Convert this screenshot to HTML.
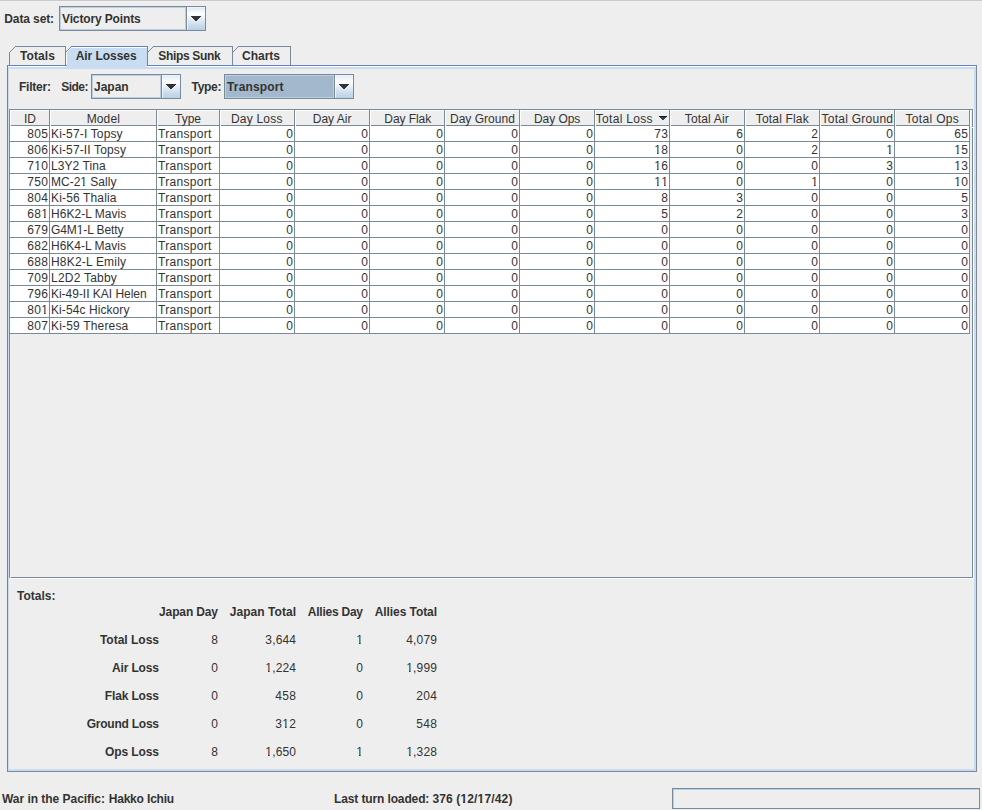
<!DOCTYPE html>
<html><head><meta charset="utf-8"><title>Tracker</title><style>
html,body{margin:0;padding:0}
body{width:982px;height:810px;overflow:hidden;background:#EEEEEE;position:relative;font-family:"Liberation Sans",sans-serif;font-size:12px;color:#333333}
.r{position:absolute}
.t{position:absolute;white-space:nowrap;line-height:14px;height:14px;font-size:12px}
.b{font-weight:bold}
.o{display:inline-block;clip-path:polygon(0 0,100% 0,100% 10px,4.35px 10px,4.35px 14px,2.75px 14px,2.75px 10px,0 10px)}
.b .o{clip-path:polygon(0 0,100% 0,100% 9px,4.7px 9px,4.7px 14px,2.5px 14px,2.5px 9px,0 9px)}
.grad{background:linear-gradient(to bottom,#DDE8F3 0%,#FFFFFF 30%,#DDE8F3 60%,#B8CFE5 100%)}
</style></head><body>
<div class="r" style="left:0px;top:0px;width:982px;height:1px;background:#C9C9C9"></div>
<div class="r" style="left:0px;top:1px;width:982px;height:1px;background:#F1F1F1"></div>
<div class="t b" style="left:4.3px;top:12px;letter-spacing:-0.113px;">Data set:</div>
<div class="r" style="left:59px;top:6px;width:147px;height:1px;background:#7A8A99"></div>
<div class="r" style="left:59px;top:30px;width:147px;height:1px;background:#7A8A99"></div>
<div class="r" style="left:59px;top:6px;width:1px;height:25px;background:#7A8A99"></div>
<div class="r" style="left:205px;top:6px;width:1px;height:25px;background:#7A8A99"></div>
<div class="r" style="left:186px;top:6px;width:1px;height:25px;background:#7A8A99"></div>
<div class="r" style="left:60px;top:7px;width:126px;height:1px;background:#B8CFE5"></div>
<div class="r" style="left:60px;top:29px;width:126px;height:1px;background:#B8CFE5"></div>
<div class="r" style="left:60px;top:7px;width:1px;height:23px;background:#B8CFE5"></div>
<div class="r" style="left:185px;top:7px;width:1px;height:23px;background:#B8CFE5"></div>
<div class="r grad" style="left:187px;top:7px;width:18px;height:23px"></div>
<div class="r" style="left:187px;top:7px;width:1px;height:23px;background:rgba(255,255,255,0.65)"></div>
<div class="r" style="left:188px;top:7px;width:17px;height:1px;background:rgba(255,255,255,0.45)"></div>
<div class="r" style="left:191px;top:16px;width:10px;height:1px;background:#333333"></div>
<div class="r" style="left:192px;top:17px;width:8px;height:1px;background:#333333"></div>
<div class="r" style="left:193px;top:18px;width:6px;height:1px;background:#333333"></div>
<div class="r" style="left:194px;top:19px;width:4px;height:1px;background:#333333"></div>
<div class="r" style="left:195px;top:20px;width:2px;height:1px;background:#333333"></div>
<div class="t b" style="left:62px;top:12px;letter-spacing:-0.138px;">Victory Points</div>
<div class="r" style="left:7px;top:65px;width:970px;height:707px;background:#C8DDF2"></div>
<div class="r" style="left:9px;top:69px;width:965px;height:700px;background:#EEEEEE"></div>
<div class="r" style="left:7px;top:65px;width:1px;height:707px;background:#6382BF"></div>
<div class="r" style="left:7px;top:65px;width:969px;height:1px;background:#6382BF"></div>
<div class="r" style="left:8px;top:66px;width:968px;height:1px;background:#FFFFFF"></div>
<div class="r" style="left:976px;top:65px;width:1px;height:707px;background:#7A8A99"></div>
<div class="r" style="left:7px;top:771px;width:970px;height:1px;background:#7A8A99"></div>
<div class="r" style="left:9px;top:52px;width:1px;height:13px;background:#7A8A99"></div>
<div class="r" style="left:10px;top:51px;width:1px;height:1px;background:#7A8A99"></div>
<div class="r" style="left:11px;top:50px;width:1px;height:1px;background:#7A8A99"></div>
<div class="r" style="left:12px;top:49px;width:1px;height:1px;background:#7A8A99"></div>
<div class="r" style="left:13px;top:48px;width:1px;height:1px;background:#7A8A99"></div>
<div class="r" style="left:14px;top:47px;width:1px;height:1px;background:#7A8A99"></div>
<div class="r" style="left:15px;top:46px;width:51px;height:1px;background:#7A8A99"></div>
<div class="r" style="left:65px;top:46px;width:1px;height:19px;background:#7A8A99"></div>
<div class="r" style="left:147px;top:52px;width:1px;height:13px;background:#7A8A99"></div>
<div class="r" style="left:148px;top:51px;width:1px;height:1px;background:#7A8A99"></div>
<div class="r" style="left:149px;top:50px;width:1px;height:1px;background:#7A8A99"></div>
<div class="r" style="left:150px;top:49px;width:1px;height:1px;background:#7A8A99"></div>
<div class="r" style="left:151px;top:48px;width:1px;height:1px;background:#7A8A99"></div>
<div class="r" style="left:152px;top:47px;width:1px;height:1px;background:#7A8A99"></div>
<div class="r" style="left:153px;top:46px;width:80px;height:1px;background:#7A8A99"></div>
<div class="r" style="left:232px;top:46px;width:1px;height:19px;background:#7A8A99"></div>
<div class="r" style="left:232px;top:52px;width:1px;height:13px;background:#7A8A99"></div>
<div class="r" style="left:233px;top:51px;width:1px;height:1px;background:#7A8A99"></div>
<div class="r" style="left:234px;top:50px;width:1px;height:1px;background:#7A8A99"></div>
<div class="r" style="left:235px;top:49px;width:1px;height:1px;background:#7A8A99"></div>
<div class="r" style="left:236px;top:48px;width:1px;height:1px;background:#7A8A99"></div>
<div class="r" style="left:237px;top:47px;width:1px;height:1px;background:#7A8A99"></div>
<div class="r" style="left:238px;top:46px;width:53px;height:1px;background:#7A8A99"></div>
<div class="r" style="left:290px;top:46px;width:1px;height:19px;background:#7A8A99"></div>
<div class="r" style="left:67px;top:52px;width:80px;height:17px;background:#C8DDF2"></div>
<div class="r" style="left:68px;top:51px;width:79px;height:1px;background:#C8DDF2"></div>
<div class="r" style="left:67px;top:51px;width:1px;height:1px;background:#FFFFFF"></div>
<div class="r" style="left:69px;top:50px;width:78px;height:1px;background:#C8DDF2"></div>
<div class="r" style="left:68px;top:50px;width:1px;height:1px;background:#FFFFFF"></div>
<div class="r" style="left:70px;top:49px;width:77px;height:1px;background:#C8DDF2"></div>
<div class="r" style="left:69px;top:49px;width:1px;height:1px;background:#FFFFFF"></div>
<div class="r" style="left:71px;top:48px;width:76px;height:1px;background:#C8DDF2"></div>
<div class="r" style="left:70px;top:48px;width:1px;height:1px;background:#FFFFFF"></div>
<div class="r" style="left:72px;top:47px;width:75px;height:1px;background:#C8DDF2"></div>
<div class="r" style="left:71px;top:47px;width:1px;height:1px;background:#FFFFFF"></div>
<div class="r" style="left:71px;top:47px;width:76px;height:1px;background:#FFFFFF"></div>
<div class="r" style="left:66px;top:52px;width:1px;height:13px;background:#FFFFFF"></div>
<div class="r" style="left:66px;top:65px;width:1px;height:1px;background:#6382BF"></div>
<div class="r" style="left:66px;top:66px;width:1px;height:1px;background:#FFFFFF"></div>
<div class="r" style="left:65px;top:52px;width:1px;height:14px;background:#6382BF"></div>
<div class="r" style="left:66px;top:51px;width:1px;height:1px;background:#6382BF"></div>
<div class="r" style="left:67px;top:50px;width:1px;height:1px;background:#6382BF"></div>
<div class="r" style="left:68px;top:49px;width:1px;height:1px;background:#6382BF"></div>
<div class="r" style="left:69px;top:48px;width:1px;height:1px;background:#6382BF"></div>
<div class="r" style="left:70px;top:47px;width:1px;height:1px;background:#6382BF"></div>
<div class="r" style="left:71px;top:46px;width:77px;height:1px;background:#6382BF"></div>
<div class="r" style="left:147px;top:46px;width:1px;height:20px;background:#6382BF"></div>
<div class="t b" style="left:8.04px;width:59px;text-align:center;top:49px;letter-spacing:0.080px;">Totals</div>
<div class="t b" style="left:63.6778px;width:85px;text-align:center;top:49px;letter-spacing:-0.044px;">Air Losses</div>
<div class="t b" style="left:145.331px;width:88px;text-align:center;top:49px;letter-spacing:-0.339px;">Ships Sunk</div>
<div class="t b" style="left:230.5px;width:61px;text-align:center;top:49px;">Charts</div>
<div class="t b" style="left:19px;top:80px;letter-spacing:-0.233px;">Filter:</div>
<div class="t b" style="left:61.2px;top:80px;letter-spacing:-0.500px;">Side:</div>
<div class="r" style="left:91px;top:74px;width:90px;height:1px;background:#7A8A99"></div>
<div class="r" style="left:91px;top:98px;width:90px;height:1px;background:#7A8A99"></div>
<div class="r" style="left:91px;top:74px;width:1px;height:25px;background:#7A8A99"></div>
<div class="r" style="left:180px;top:74px;width:1px;height:25px;background:#7A8A99"></div>
<div class="r" style="left:161px;top:74px;width:1px;height:25px;background:#7A8A99"></div>
<div class="r" style="left:92px;top:75px;width:69px;height:1px;background:#B8CFE5"></div>
<div class="r" style="left:92px;top:97px;width:69px;height:1px;background:#B8CFE5"></div>
<div class="r" style="left:92px;top:75px;width:1px;height:23px;background:#B8CFE5"></div>
<div class="r" style="left:160px;top:75px;width:1px;height:23px;background:#B8CFE5"></div>
<div class="r grad" style="left:162px;top:75px;width:18px;height:23px"></div>
<div class="r" style="left:162px;top:75px;width:1px;height:23px;background:rgba(255,255,255,0.65)"></div>
<div class="r" style="left:163px;top:75px;width:17px;height:1px;background:rgba(255,255,255,0.45)"></div>
<div class="r" style="left:166px;top:84px;width:10px;height:1px;background:#333333"></div>
<div class="r" style="left:167px;top:85px;width:8px;height:1px;background:#333333"></div>
<div class="r" style="left:168px;top:86px;width:6px;height:1px;background:#333333"></div>
<div class="r" style="left:169px;top:87px;width:4px;height:1px;background:#333333"></div>
<div class="r" style="left:170px;top:88px;width:2px;height:1px;background:#333333"></div>
<div class="t b" style="left:94px;top:80px;">Japan</div>
<div class="t b" style="left:191.5px;top:80px;letter-spacing:-0.300px;">Type:</div>
<div class="r" style="left:224px;top:74px;width:130px;height:1px;background:#7A8A99"></div>
<div class="r" style="left:224px;top:98px;width:130px;height:1px;background:#7A8A99"></div>
<div class="r" style="left:224px;top:74px;width:1px;height:25px;background:#7A8A99"></div>
<div class="r" style="left:353px;top:74px;width:1px;height:25px;background:#7A8A99"></div>
<div class="r" style="left:334px;top:74px;width:1px;height:25px;background:#7A8A99"></div>
<div class="r" style="left:225px;top:75px;width:109px;height:1px;background:#B8CFE5"></div>
<div class="r" style="left:225px;top:97px;width:109px;height:1px;background:#B8CFE5"></div>
<div class="r" style="left:225px;top:75px;width:1px;height:23px;background:#B8CFE5"></div>
<div class="r" style="left:333px;top:75px;width:1px;height:23px;background:#B8CFE5"></div>
<div class="r" style="left:226px;top:76px;width:107px;height:21px;background:#A3B8CC"></div>
<div class="r grad" style="left:335px;top:75px;width:18px;height:23px"></div>
<div class="r" style="left:335px;top:75px;width:1px;height:23px;background:rgba(255,255,255,0.65)"></div>
<div class="r" style="left:336px;top:75px;width:17px;height:1px;background:rgba(255,255,255,0.45)"></div>
<div class="r" style="left:339px;top:84px;width:10px;height:1px;background:#333333"></div>
<div class="r" style="left:340px;top:85px;width:8px;height:1px;background:#333333"></div>
<div class="r" style="left:341px;top:86px;width:6px;height:1px;background:#333333"></div>
<div class="r" style="left:342px;top:87px;width:4px;height:1px;background:#333333"></div>
<div class="r" style="left:343px;top:88px;width:2px;height:1px;background:#333333"></div>
<div class="t b" style="left:227px;top:80px;letter-spacing:0.150px;">Transport</div>
<div class="r" style="left:9px;top:109px;width:964px;height:1px;background:#7A8A99"></div>
<div class="r" style="left:9px;top:577px;width:964px;height:1px;background:#7A8A99"></div>
<div class="r" style="left:9px;top:109px;width:1px;height:469px;background:#7A8A99"></div>
<div class="r" style="left:972px;top:109px;width:1px;height:469px;background:#7A8A99"></div>
<div class="r" style="left:973px;top:110px;width:1px;height:469px;background:#FFFFFF"></div>
<div class="r" style="left:10px;top:578px;width:964px;height:1px;background:#FFFFFF"></div>
<div class="r" style="left:972px;top:127px;width:1px;height:1px;background:#EEEEEE"></div>
<div class="r" style="left:10px;top:577px;width:1px;height:1px;background:#EEEEEE"></div>
<div class="r" style="left:10px;top:110px;width:962px;height:1px;background:#FFFFFF"></div>
<div class="r" style="left:970px;top:110px;width:1px;height:16px;background:#FFFFFF"></div>
<div class="r" style="left:10px;top:126px;width:960px;height:208px;background:#FFFFFF"></div>
<div class="r" style="left:10px;top:110px;width:40px;height:16px;background:#EEEEEE"></div>
<div class="r" style="left:10px;top:110px;width:39px;height:1px;background:#FFFFFF"></div>
<div class="r" style="left:10px;top:110px;width:1px;height:15px;background:#FFFFFF"></div>
<div class="r" style="left:49px;top:110px;width:1px;height:16px;background:#7A8A99"></div>
<div class="r" style="left:11px;top:125px;width:39px;height:1px;background:#7A8A99"></div>
<div class="t" style="left:11px;width:38px;text-align:center;top:112px;">ID</div>
<div class="r" style="left:49px;top:126px;width:1px;height:208px;background:#7A8A99"></div>
<div class="r" style="left:50px;top:110px;width:107px;height:16px;background:#EEEEEE"></div>
<div class="r" style="left:50px;top:110px;width:106px;height:1px;background:#FFFFFF"></div>
<div class="r" style="left:50px;top:110px;width:1px;height:15px;background:#FFFFFF"></div>
<div class="r" style="left:156px;top:110px;width:1px;height:16px;background:#7A8A99"></div>
<div class="r" style="left:51px;top:125px;width:106px;height:1px;background:#7A8A99"></div>
<div class="t" style="left:50.8125px;width:105px;text-align:center;top:112px;letter-spacing:0.125px;">Model</div>
<div class="r" style="left:156px;top:126px;width:1px;height:208px;background:#7A8A99"></div>
<div class="r" style="left:157px;top:110px;width:63px;height:16px;background:#EEEEEE"></div>
<div class="r" style="left:157px;top:110px;width:62px;height:1px;background:#FFFFFF"></div>
<div class="r" style="left:157px;top:110px;width:1px;height:15px;background:#FFFFFF"></div>
<div class="r" style="left:219px;top:110px;width:1px;height:16px;background:#7A8A99"></div>
<div class="r" style="left:158px;top:125px;width:62px;height:1px;background:#7A8A99"></div>
<div class="t" style="left:157.5px;width:61px;text-align:center;top:112px;">Type</div>
<div class="r" style="left:219px;top:126px;width:1px;height:208px;background:#7A8A99"></div>
<div class="r" style="left:220px;top:110px;width:75px;height:16px;background:#EEEEEE"></div>
<div class="r" style="left:220px;top:110px;width:74px;height:1px;background:#FFFFFF"></div>
<div class="r" style="left:220px;top:110px;width:1px;height:15px;background:#FFFFFF"></div>
<div class="r" style="left:294px;top:110px;width:1px;height:16px;background:#7A8A99"></div>
<div class="r" style="left:221px;top:125px;width:74px;height:1px;background:#7A8A99"></div>
<div class="t" style="left:220.314px;width:73px;text-align:center;top:112px;letter-spacing:0.229px;">Day Loss</div>
<div class="r" style="left:294px;top:126px;width:1px;height:208px;background:#7A8A99"></div>
<div class="r" style="left:295px;top:110px;width:75px;height:16px;background:#EEEEEE"></div>
<div class="r" style="left:295px;top:110px;width:74px;height:1px;background:#FFFFFF"></div>
<div class="r" style="left:295px;top:110px;width:1px;height:15px;background:#FFFFFF"></div>
<div class="r" style="left:369px;top:110px;width:1px;height:16px;background:#7A8A99"></div>
<div class="r" style="left:296px;top:125px;width:74px;height:1px;background:#7A8A99"></div>
<div class="t" style="left:295.6px;width:73px;text-align:center;top:112px;">Day Air</div>
<div class="r" style="left:369px;top:126px;width:1px;height:208px;background:#7A8A99"></div>
<div class="r" style="left:370px;top:110px;width:75px;height:16px;background:#EEEEEE"></div>
<div class="r" style="left:370px;top:110px;width:74px;height:1px;background:#FFFFFF"></div>
<div class="r" style="left:370px;top:110px;width:1px;height:15px;background:#FFFFFF"></div>
<div class="r" style="left:444px;top:110px;width:1px;height:16px;background:#7A8A99"></div>
<div class="r" style="left:371px;top:125px;width:74px;height:1px;background:#7A8A99"></div>
<div class="t" style="left:371.214px;width:73px;text-align:center;top:112px;letter-spacing:-0.071px;">Day Flak</div>
<div class="r" style="left:444px;top:126px;width:1px;height:208px;background:#7A8A99"></div>
<div class="r" style="left:445px;top:110px;width:75px;height:16px;background:#EEEEEE"></div>
<div class="r" style="left:445px;top:110px;width:74px;height:1px;background:#FFFFFF"></div>
<div class="r" style="left:445px;top:110px;width:1px;height:15px;background:#FFFFFF"></div>
<div class="r" style="left:519px;top:110px;width:1px;height:16px;background:#7A8A99"></div>
<div class="r" style="left:446px;top:125px;width:74px;height:1px;background:#7A8A99"></div>
<div class="t" style="left:445.911px;width:73px;text-align:center;top:112px;letter-spacing:0.022px;">Day Ground</div>
<div class="r" style="left:519px;top:126px;width:1px;height:208px;background:#7A8A99"></div>
<div class="r" style="left:520px;top:110px;width:75px;height:16px;background:#EEEEEE"></div>
<div class="r" style="left:520px;top:110px;width:74px;height:1px;background:#FFFFFF"></div>
<div class="r" style="left:520px;top:110px;width:1px;height:15px;background:#FFFFFF"></div>
<div class="r" style="left:594px;top:110px;width:1px;height:16px;background:#7A8A99"></div>
<div class="r" style="left:521px;top:125px;width:74px;height:1px;background:#7A8A99"></div>
<div class="t" style="left:520.579px;width:73px;text-align:center;top:112px;letter-spacing:-0.042px;">Day Ops</div>
<div class="r" style="left:594px;top:126px;width:1px;height:208px;background:#7A8A99"></div>
<div class="r" style="left:595px;top:110px;width:75px;height:16px;background:#EEEEEE"></div>
<div class="r" style="left:595px;top:110px;width:74px;height:1px;background:#FFFFFF"></div>
<div class="r" style="left:595px;top:110px;width:1px;height:15px;background:#FFFFFF"></div>
<div class="r" style="left:669px;top:110px;width:1px;height:16px;background:#7A8A99"></div>
<div class="r" style="left:596px;top:125px;width:74px;height:1px;background:#7A8A99"></div>
<div class="t" style="left:595.8px;top:112px;letter-spacing:0.289px;">Total Loss</div>
<div class="r" style="left:659px;top:116px;width:8px;height:1px;background:#0D1A26"></div>
<div class="r" style="left:660px;top:117px;width:6px;height:1px;background:#274560"></div>
<div class="r" style="left:661px;top:118px;width:4px;height:1px;background:#274560"></div>
<div class="r" style="left:662px;top:119px;width:2px;height:1px;background:#274560"></div>
<div class="r" style="left:669px;top:126px;width:1px;height:208px;background:#7A8A99"></div>
<div class="r" style="left:670px;top:110px;width:75px;height:16px;background:#EEEEEE"></div>
<div class="r" style="left:670px;top:110px;width:74px;height:1px;background:#FFFFFF"></div>
<div class="r" style="left:670px;top:110px;width:1px;height:15px;background:#FFFFFF"></div>
<div class="r" style="left:744px;top:110px;width:1px;height:16px;background:#7A8A99"></div>
<div class="r" style="left:671px;top:125px;width:74px;height:1px;background:#7A8A99"></div>
<div class="t" style="left:670.387px;width:73px;text-align:center;top:112px;letter-spacing:0.175px;">Total Air</div>
<div class="r" style="left:744px;top:126px;width:1px;height:208px;background:#7A8A99"></div>
<div class="r" style="left:745px;top:110px;width:75px;height:16px;background:#EEEEEE"></div>
<div class="r" style="left:745px;top:110px;width:74px;height:1px;background:#FFFFFF"></div>
<div class="r" style="left:745px;top:110px;width:1px;height:15px;background:#FFFFFF"></div>
<div class="r" style="left:819px;top:110px;width:1px;height:16px;background:#7A8A99"></div>
<div class="r" style="left:746px;top:125px;width:74px;height:1px;background:#7A8A99"></div>
<div class="t" style="left:745.833px;width:73px;text-align:center;top:112px;letter-spacing:0.167px;">Total Flak</div>
<div class="r" style="left:819px;top:126px;width:1px;height:208px;background:#7A8A99"></div>
<div class="r" style="left:820px;top:110px;width:75px;height:16px;background:#EEEEEE"></div>
<div class="r" style="left:820px;top:110px;width:74px;height:1px;background:#FFFFFF"></div>
<div class="r" style="left:820px;top:110px;width:1px;height:15px;background:#FFFFFF"></div>
<div class="r" style="left:894px;top:110px;width:1px;height:16px;background:#7A8A99"></div>
<div class="r" style="left:821px;top:125px;width:74px;height:1px;background:#7A8A99"></div>
<div class="t" style="left:820.882px;width:73px;text-align:center;top:112px;letter-spacing:0.264px;">Total Ground</div>
<div class="r" style="left:894px;top:126px;width:1px;height:208px;background:#7A8A99"></div>
<div class="r" style="left:895px;top:110px;width:75px;height:16px;background:#EEEEEE"></div>
<div class="r" style="left:895px;top:110px;width:74px;height:1px;background:#FFFFFF"></div>
<div class="r" style="left:895px;top:110px;width:1px;height:15px;background:#FFFFFF"></div>
<div class="r" style="left:969px;top:110px;width:1px;height:16px;background:#7A8A99"></div>
<div class="r" style="left:896px;top:125px;width:74px;height:1px;background:#7A8A99"></div>
<div class="t" style="left:895.819px;width:73px;text-align:center;top:112px;letter-spacing:0.338px;">Total Ops</div>
<div class="r" style="left:969px;top:126px;width:1px;height:208px;background:#7A8A99"></div>
<div class="r" style="left:10px;top:141px;width:960px;height:1px;background:#7A8A99"></div>
<div class="t" style="left:-251.667px;width:300px;text-align:right;top:127px;letter-spacing:0.333px;">805</div>
<div class="t" style="left:51px;top:127px;letter-spacing:0.150px;">Ki-57-I Topsy</div>
<div class="t" style="left:158px;top:127px;letter-spacing:0.312px;">Transport</div>
<div class="t" style="left:-7px;width:300px;text-align:right;top:127px;">0</div>
<div class="t" style="left:68px;width:300px;text-align:right;top:127px;">0</div>
<div class="t" style="left:143px;width:300px;text-align:right;top:127px;">0</div>
<div class="t" style="left:218px;width:300px;text-align:right;top:127px;">0</div>
<div class="t" style="left:293px;width:300px;text-align:right;top:127px;">0</div>
<div class="t" style="left:368.333px;width:300px;text-align:right;top:127px;letter-spacing:0.333px;">73</div>
<div class="t" style="left:443px;width:300px;text-align:right;top:127px;">6</div>
<div class="t" style="left:518px;width:300px;text-align:right;top:127px;">2</div>
<div class="t" style="left:593px;width:300px;text-align:right;top:127px;">0</div>
<div class="t" style="left:668.333px;width:300px;text-align:right;top:127px;letter-spacing:0.333px;">65</div>
<div class="r" style="left:10px;top:157px;width:960px;height:1px;background:#7A8A99"></div>
<div class="t" style="left:-251.667px;width:300px;text-align:right;top:143px;letter-spacing:0.333px;">806</div>
<div class="t" style="left:51px;top:143px;letter-spacing:0.138px;">Ki-57-II Topsy</div>
<div class="t" style="left:158px;top:143px;letter-spacing:0.312px;">Transport</div>
<div class="t" style="left:-7px;width:300px;text-align:right;top:143px;">0</div>
<div class="t" style="left:68px;width:300px;text-align:right;top:143px;">0</div>
<div class="t" style="left:143px;width:300px;text-align:right;top:143px;">0</div>
<div class="t" style="left:218px;width:300px;text-align:right;top:143px;">0</div>
<div class="t" style="left:293px;width:300px;text-align:right;top:143px;">0</div>
<div class="t" style="left:368.333px;width:300px;text-align:right;top:143px;letter-spacing:0.333px;"><span class="o">1</span>8</div>
<div class="t" style="left:443px;width:300px;text-align:right;top:143px;">0</div>
<div class="t" style="left:518px;width:300px;text-align:right;top:143px;">2</div>
<div class="t" style="left:593px;width:300px;text-align:right;top:143px;"><span class="o">1</span></div>
<div class="t" style="left:668.333px;width:300px;text-align:right;top:143px;letter-spacing:0.333px;"><span class="o">1</span>5</div>
<div class="r" style="left:10px;top:173px;width:960px;height:1px;background:#7A8A99"></div>
<div class="t" style="left:-251.667px;width:300px;text-align:right;top:159px;letter-spacing:0.333px;">7<span class="o">1</span>0</div>
<div class="t" style="left:51px;top:159px;letter-spacing:0.087px;">L3Y2 Tina</div>
<div class="t" style="left:158px;top:159px;letter-spacing:0.312px;">Transport</div>
<div class="t" style="left:-7px;width:300px;text-align:right;top:159px;">0</div>
<div class="t" style="left:68px;width:300px;text-align:right;top:159px;">0</div>
<div class="t" style="left:143px;width:300px;text-align:right;top:159px;">0</div>
<div class="t" style="left:218px;width:300px;text-align:right;top:159px;">0</div>
<div class="t" style="left:293px;width:300px;text-align:right;top:159px;">0</div>
<div class="t" style="left:368.333px;width:300px;text-align:right;top:159px;letter-spacing:0.333px;"><span class="o">1</span>6</div>
<div class="t" style="left:443px;width:300px;text-align:right;top:159px;">0</div>
<div class="t" style="left:518px;width:300px;text-align:right;top:159px;">0</div>
<div class="t" style="left:593px;width:300px;text-align:right;top:159px;">3</div>
<div class="t" style="left:668.333px;width:300px;text-align:right;top:159px;letter-spacing:0.333px;"><span class="o">1</span>3</div>
<div class="r" style="left:10px;top:189px;width:960px;height:1px;background:#7A8A99"></div>
<div class="t" style="left:-251.667px;width:300px;text-align:right;top:175px;letter-spacing:0.333px;">750</div>
<div class="t" style="left:51px;top:175px;">MC-2<span class="o">1</span> Sally</div>
<div class="t" style="left:158px;top:175px;letter-spacing:0.312px;">Transport</div>
<div class="t" style="left:-7px;width:300px;text-align:right;top:175px;">0</div>
<div class="t" style="left:68px;width:300px;text-align:right;top:175px;">0</div>
<div class="t" style="left:143px;width:300px;text-align:right;top:175px;">0</div>
<div class="t" style="left:218px;width:300px;text-align:right;top:175px;">0</div>
<div class="t" style="left:293px;width:300px;text-align:right;top:175px;">0</div>
<div class="t" style="left:368.333px;width:300px;text-align:right;top:175px;letter-spacing:0.333px;"><span class="o">1</span><span class="o">1</span></div>
<div class="t" style="left:443px;width:300px;text-align:right;top:175px;">0</div>
<div class="t" style="left:518px;width:300px;text-align:right;top:175px;"><span class="o">1</span></div>
<div class="t" style="left:593px;width:300px;text-align:right;top:175px;">0</div>
<div class="t" style="left:668.333px;width:300px;text-align:right;top:175px;letter-spacing:0.333px;"><span class="o">1</span>0</div>
<div class="r" style="left:10px;top:205px;width:960px;height:1px;background:#7A8A99"></div>
<div class="t" style="left:-251.667px;width:300px;text-align:right;top:191px;letter-spacing:0.333px;">804</div>
<div class="t" style="left:51px;top:191px;letter-spacing:0.155px;">Ki-56 Thalia</div>
<div class="t" style="left:158px;top:191px;letter-spacing:0.312px;">Transport</div>
<div class="t" style="left:-7px;width:300px;text-align:right;top:191px;">0</div>
<div class="t" style="left:68px;width:300px;text-align:right;top:191px;">0</div>
<div class="t" style="left:143px;width:300px;text-align:right;top:191px;">0</div>
<div class="t" style="left:218px;width:300px;text-align:right;top:191px;">0</div>
<div class="t" style="left:293px;width:300px;text-align:right;top:191px;">0</div>
<div class="t" style="left:368px;width:300px;text-align:right;top:191px;">8</div>
<div class="t" style="left:443px;width:300px;text-align:right;top:191px;">3</div>
<div class="t" style="left:518px;width:300px;text-align:right;top:191px;">0</div>
<div class="t" style="left:593px;width:300px;text-align:right;top:191px;">0</div>
<div class="t" style="left:668px;width:300px;text-align:right;top:191px;">5</div>
<div class="r" style="left:10px;top:221px;width:960px;height:1px;background:#7A8A99"></div>
<div class="t" style="left:-251.667px;width:300px;text-align:right;top:207px;letter-spacing:0.333px;">68<span class="o">1</span></div>
<div class="t" style="left:51px;top:207px;letter-spacing:0.036px;">H6K2-L Mavis</div>
<div class="t" style="left:158px;top:207px;letter-spacing:0.312px;">Transport</div>
<div class="t" style="left:-7px;width:300px;text-align:right;top:207px;">0</div>
<div class="t" style="left:68px;width:300px;text-align:right;top:207px;">0</div>
<div class="t" style="left:143px;width:300px;text-align:right;top:207px;">0</div>
<div class="t" style="left:218px;width:300px;text-align:right;top:207px;">0</div>
<div class="t" style="left:293px;width:300px;text-align:right;top:207px;">0</div>
<div class="t" style="left:368px;width:300px;text-align:right;top:207px;">5</div>
<div class="t" style="left:443px;width:300px;text-align:right;top:207px;">2</div>
<div class="t" style="left:518px;width:300px;text-align:right;top:207px;">0</div>
<div class="t" style="left:593px;width:300px;text-align:right;top:207px;">0</div>
<div class="t" style="left:668px;width:300px;text-align:right;top:207px;">3</div>
<div class="r" style="left:10px;top:237px;width:960px;height:1px;background:#7A8A99"></div>
<div class="t" style="left:-251.667px;width:300px;text-align:right;top:223px;letter-spacing:0.333px;">679</div>
<div class="t" style="left:51px;top:223px;letter-spacing:-0.091px;">G4M<span class="o">1</span>-L Betty</div>
<div class="t" style="left:158px;top:223px;letter-spacing:0.312px;">Transport</div>
<div class="t" style="left:-7px;width:300px;text-align:right;top:223px;">0</div>
<div class="t" style="left:68px;width:300px;text-align:right;top:223px;">0</div>
<div class="t" style="left:143px;width:300px;text-align:right;top:223px;">0</div>
<div class="t" style="left:218px;width:300px;text-align:right;top:223px;">0</div>
<div class="t" style="left:293px;width:300px;text-align:right;top:223px;">0</div>
<div class="t" style="left:368px;width:300px;text-align:right;top:223px;">0</div>
<div class="t" style="left:443px;width:300px;text-align:right;top:223px;">0</div>
<div class="t" style="left:518px;width:300px;text-align:right;top:223px;">0</div>
<div class="t" style="left:593px;width:300px;text-align:right;top:223px;">0</div>
<div class="t" style="left:668px;width:300px;text-align:right;top:223px;">0</div>
<div class="r" style="left:10px;top:253px;width:960px;height:1px;background:#7A8A99"></div>
<div class="t" style="left:-251.667px;width:300px;text-align:right;top:239px;letter-spacing:0.333px;">682</div>
<div class="t" style="left:51px;top:239px;">H6K4-L Mavis</div>
<div class="t" style="left:158px;top:239px;letter-spacing:0.312px;">Transport</div>
<div class="t" style="left:-7px;width:300px;text-align:right;top:239px;">0</div>
<div class="t" style="left:68px;width:300px;text-align:right;top:239px;">0</div>
<div class="t" style="left:143px;width:300px;text-align:right;top:239px;">0</div>
<div class="t" style="left:218px;width:300px;text-align:right;top:239px;">0</div>
<div class="t" style="left:293px;width:300px;text-align:right;top:239px;">0</div>
<div class="t" style="left:368px;width:300px;text-align:right;top:239px;">0</div>
<div class="t" style="left:443px;width:300px;text-align:right;top:239px;">0</div>
<div class="t" style="left:518px;width:300px;text-align:right;top:239px;">0</div>
<div class="t" style="left:593px;width:300px;text-align:right;top:239px;">0</div>
<div class="t" style="left:668px;width:300px;text-align:right;top:239px;">0</div>
<div class="r" style="left:10px;top:269px;width:960px;height:1px;background:#7A8A99"></div>
<div class="t" style="left:-251.667px;width:300px;text-align:right;top:255px;letter-spacing:0.333px;">688</div>
<div class="t" style="left:51px;top:255px;letter-spacing:0.191px;">H8K2-L Emily</div>
<div class="t" style="left:158px;top:255px;letter-spacing:0.312px;">Transport</div>
<div class="t" style="left:-7px;width:300px;text-align:right;top:255px;">0</div>
<div class="t" style="left:68px;width:300px;text-align:right;top:255px;">0</div>
<div class="t" style="left:143px;width:300px;text-align:right;top:255px;">0</div>
<div class="t" style="left:218px;width:300px;text-align:right;top:255px;">0</div>
<div class="t" style="left:293px;width:300px;text-align:right;top:255px;">0</div>
<div class="t" style="left:368px;width:300px;text-align:right;top:255px;">0</div>
<div class="t" style="left:443px;width:300px;text-align:right;top:255px;">0</div>
<div class="t" style="left:518px;width:300px;text-align:right;top:255px;">0</div>
<div class="t" style="left:593px;width:300px;text-align:right;top:255px;">0</div>
<div class="t" style="left:668px;width:300px;text-align:right;top:255px;">0</div>
<div class="r" style="left:10px;top:285px;width:960px;height:1px;background:#7A8A99"></div>
<div class="t" style="left:-251.667px;width:300px;text-align:right;top:271px;letter-spacing:0.333px;">709</div>
<div class="t" style="left:51px;top:271px;letter-spacing:0.222px;">L2D2 Tabby</div>
<div class="t" style="left:158px;top:271px;letter-spacing:0.312px;">Transport</div>
<div class="t" style="left:-7px;width:300px;text-align:right;top:271px;">0</div>
<div class="t" style="left:68px;width:300px;text-align:right;top:271px;">0</div>
<div class="t" style="left:143px;width:300px;text-align:right;top:271px;">0</div>
<div class="t" style="left:218px;width:300px;text-align:right;top:271px;">0</div>
<div class="t" style="left:293px;width:300px;text-align:right;top:271px;">0</div>
<div class="t" style="left:368px;width:300px;text-align:right;top:271px;">0</div>
<div class="t" style="left:443px;width:300px;text-align:right;top:271px;">0</div>
<div class="t" style="left:518px;width:300px;text-align:right;top:271px;">0</div>
<div class="t" style="left:593px;width:300px;text-align:right;top:271px;">0</div>
<div class="t" style="left:668px;width:300px;text-align:right;top:271px;">0</div>
<div class="r" style="left:10px;top:301px;width:960px;height:1px;background:#7A8A99"></div>
<div class="t" style="left:-251.667px;width:300px;text-align:right;top:287px;letter-spacing:0.333px;">796</div>
<div class="t" style="left:51px;top:287px;letter-spacing:-0.024px;">Ki-49-II KAI Helen</div>
<div class="t" style="left:158px;top:287px;letter-spacing:0.312px;">Transport</div>
<div class="t" style="left:-7px;width:300px;text-align:right;top:287px;">0</div>
<div class="t" style="left:68px;width:300px;text-align:right;top:287px;">0</div>
<div class="t" style="left:143px;width:300px;text-align:right;top:287px;">0</div>
<div class="t" style="left:218px;width:300px;text-align:right;top:287px;">0</div>
<div class="t" style="left:293px;width:300px;text-align:right;top:287px;">0</div>
<div class="t" style="left:368px;width:300px;text-align:right;top:287px;">0</div>
<div class="t" style="left:443px;width:300px;text-align:right;top:287px;">0</div>
<div class="t" style="left:518px;width:300px;text-align:right;top:287px;">0</div>
<div class="t" style="left:593px;width:300px;text-align:right;top:287px;">0</div>
<div class="t" style="left:668px;width:300px;text-align:right;top:287px;">0</div>
<div class="r" style="left:10px;top:317px;width:960px;height:1px;background:#7A8A99"></div>
<div class="t" style="left:-251.667px;width:300px;text-align:right;top:303px;letter-spacing:0.333px;">80<span class="o">1</span></div>
<div class="t" style="left:51px;top:303px;letter-spacing:0.085px;">Ki-54c Hickory</div>
<div class="t" style="left:158px;top:303px;letter-spacing:0.312px;">Transport</div>
<div class="t" style="left:-7px;width:300px;text-align:right;top:303px;">0</div>
<div class="t" style="left:68px;width:300px;text-align:right;top:303px;">0</div>
<div class="t" style="left:143px;width:300px;text-align:right;top:303px;">0</div>
<div class="t" style="left:218px;width:300px;text-align:right;top:303px;">0</div>
<div class="t" style="left:293px;width:300px;text-align:right;top:303px;">0</div>
<div class="t" style="left:368px;width:300px;text-align:right;top:303px;">0</div>
<div class="t" style="left:443px;width:300px;text-align:right;top:303px;">0</div>
<div class="t" style="left:518px;width:300px;text-align:right;top:303px;">0</div>
<div class="t" style="left:593px;width:300px;text-align:right;top:303px;">0</div>
<div class="t" style="left:668px;width:300px;text-align:right;top:303px;">0</div>
<div class="r" style="left:10px;top:333px;width:960px;height:1px;background:#7A8A99"></div>
<div class="t" style="left:-251.667px;width:300px;text-align:right;top:319px;letter-spacing:0.333px;">807</div>
<div class="t" style="left:51px;top:319px;letter-spacing:0.175px;">Ki-59 Theresa</div>
<div class="t" style="left:158px;top:319px;letter-spacing:0.312px;">Transport</div>
<div class="t" style="left:-7px;width:300px;text-align:right;top:319px;">0</div>
<div class="t" style="left:68px;width:300px;text-align:right;top:319px;">0</div>
<div class="t" style="left:143px;width:300px;text-align:right;top:319px;">0</div>
<div class="t" style="left:218px;width:300px;text-align:right;top:319px;">0</div>
<div class="t" style="left:293px;width:300px;text-align:right;top:319px;">0</div>
<div class="t" style="left:368px;width:300px;text-align:right;top:319px;">0</div>
<div class="t" style="left:443px;width:300px;text-align:right;top:319px;">0</div>
<div class="t" style="left:518px;width:300px;text-align:right;top:319px;">0</div>
<div class="t" style="left:593px;width:300px;text-align:right;top:319px;">0</div>
<div class="t" style="left:668px;width:300px;text-align:right;top:319px;">0</div>
<div class="t b" style="left:17px;top:589px;">Totals:</div>
<div class="t b" style="left:-82.1375px;width:300px;text-align:right;top:605px;letter-spacing:-0.138px;">Japan Day</div>
<div class="t b" style="left:-3.96px;width:300px;text-align:right;top:605px;letter-spacing:0.040px;">Japan Total</div>
<div class="t b" style="left:62.7556px;width:300px;text-align:right;top:605px;letter-spacing:-0.244px;">Allies Day</div>
<div class="t b" style="left:136.918px;width:300px;text-align:right;top:605px;letter-spacing:-0.082px;">Allies Total</div>
<div class="t b" style="left:-141px;width:300px;text-align:right;top:633px;">Total Loss</div>
<div class="t" style="left:-82px;width:300px;text-align:right;top:633px;">8</div>
<div class="t" style="left:-3.82525px;width:300px;text-align:right;top:633px;letter-spacing:0.175px;">3,644</div>
<div class="t" style="left:63px;width:300px;text-align:right;top:633px;"><span class="o">1</span></div>
<div class="t" style="left:137.175px;width:300px;text-align:right;top:633px;letter-spacing:0.175px;">4,079</div>
<div class="t b" style="left:-141.143px;width:300px;text-align:right;top:661px;letter-spacing:-0.143px;">Air Loss</div>
<div class="t" style="left:-82px;width:300px;text-align:right;top:661px;">0</div>
<div class="t" style="left:-3.82525px;width:300px;text-align:right;top:661px;letter-spacing:0.175px;"><span class="o">1</span>,224</div>
<div class="t" style="left:63px;width:300px;text-align:right;top:661px;">0</div>
<div class="t" style="left:137.175px;width:300px;text-align:right;top:661px;letter-spacing:0.175px;"><span class="o">1</span>,999</div>
<div class="t b" style="left:-141.15px;width:300px;text-align:right;top:689px;letter-spacing:-0.150px;">Flak Loss</div>
<div class="t" style="left:-82px;width:300px;text-align:right;top:689px;">0</div>
<div class="t" style="left:-3.667px;width:300px;text-align:right;top:689px;letter-spacing:0.333px;">458</div>
<div class="t" style="left:63px;width:300px;text-align:right;top:689px;">0</div>
<div class="t" style="left:137.333px;width:300px;text-align:right;top:689px;letter-spacing:0.333px;">204</div>
<div class="t b" style="left:-141.24px;width:300px;text-align:right;top:717px;letter-spacing:-0.240px;">Ground Loss</div>
<div class="t" style="left:-82px;width:300px;text-align:right;top:717px;">0</div>
<div class="t" style="left:-3.667px;width:300px;text-align:right;top:717px;letter-spacing:0.333px;">3<span class="o">1</span>2</div>
<div class="t" style="left:63px;width:300px;text-align:right;top:717px;">0</div>
<div class="t" style="left:137.333px;width:300px;text-align:right;top:717px;letter-spacing:0.333px;">548</div>
<div class="t b" style="left:-141.1px;width:300px;text-align:right;top:745px;letter-spacing:-0.100px;">Ops Loss</div>
<div class="t" style="left:-82px;width:300px;text-align:right;top:745px;">8</div>
<div class="t" style="left:-3.82525px;width:300px;text-align:right;top:745px;letter-spacing:0.175px;"><span class="o">1</span>,650</div>
<div class="t" style="left:63px;width:300px;text-align:right;top:745px;"><span class="o">1</span></div>
<div class="t" style="left:137.175px;width:300px;text-align:right;top:745px;letter-spacing:0.175px;"><span class="o">1</span>,328</div>
<div class="t b" style="left:2px;top:792px;letter-spacing:-0.033px;">War in the Pacific:</div>
<div class="t b" style="left:108.7px;top:792px;letter-spacing:-0.200px;">Hakko</div>
<div class="t b" style="left:147px;top:792px;letter-spacing:-0.200px;">Ichiu</div>
<div class="t b" style="left:334px;top:792px;letter-spacing:-0.125px;">Last turn loaded:</div>
<div class="t b" style="left:212.546px;width:300px;text-align:right;top:792px;letter-spacing:0.146px;">376 (<span class="o">1</span>2/<span class="o">1</span>7/42)</div>
<div class="r" style="left:672px;top:788px;width:308px;height:1px;background:#7A8A99"></div>
<div class="r" style="left:672px;top:808px;width:308px;height:1px;background:#7A8A99"></div>
<div class="r" style="left:672px;top:788px;width:1px;height:21px;background:#7A8A99"></div>
<div class="r" style="left:979px;top:788px;width:1px;height:21px;background:#7A8A99"></div>
<div class="r" style="left:673px;top:789px;width:306px;height:1px;background:#B8CFE5"></div>
<div class="r" style="left:673px;top:789px;width:1px;height:19px;background:#B8CFE5"></div>
</body></html>
